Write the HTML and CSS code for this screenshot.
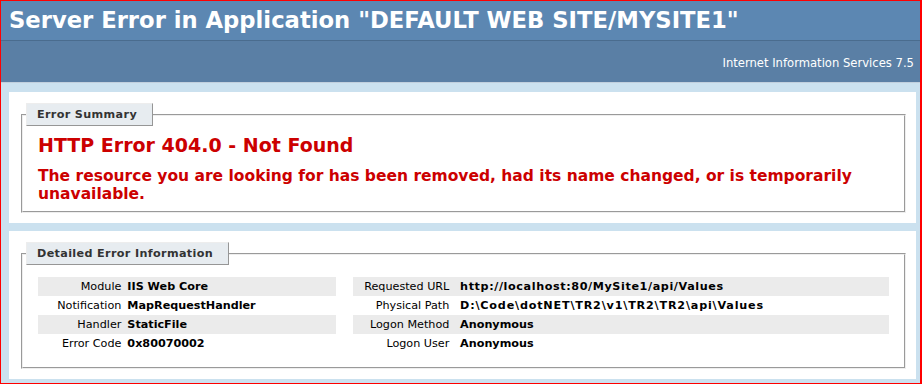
FILE: index.html
```html
<!DOCTYPE html>
<html lang="en">
<head>
    <meta charset="UTF-8" />
    <title>IIS 7.5 Detailed Error - 404.0 - Not Found</title>
    <link rel="stylesheet" href="styles.css">
</head>
<body>
    <div class="header">
        <h1>Server Error in Application "DEFAULT WEB SITE/MYSITE1"</h1>
    </div>
    <div class="server-version">
        <p>Internet Information Services 7.5</p>
    </div>
    <div class="content">
        <div class="summary-container">
            <fieldset>
                <legend>Error Summary</legend>
                <h2>HTTP Error 404.0 - Not Found</h2>
                <h3>The resource you are looking for has been removed, had its name changed, or is temporarily unavailable.</h3>
            </fieldset>
        </div>
        <div class="content-container">
            <fieldset>
                <legend>Detailed Error Information</legend>
                <div class="details">
                    <div class="details-left">
                        <table>
                            <tr class="alt"><th>Module</th><td>IIS Web Core</td></tr>
                            <tr><th>Notification</th><td>MapRequestHandler</td></tr>
                            <tr class="alt"><th>Handler</th><td>StaticFile</td></tr>
                            <tr><th>Error Code</th><td>0x80070002</td></tr>
                        </table>
                    </div>
                    <div class="details-right">
                        <table>
                            <tr class="alt"><th>Requested URL</th><td class="url">http://localhost:80/MySite1/api/Values</td></tr>
                            <tr><th>Physical Path</th><td class="path">D:\Code\dotNET\TR2\v1\TR2\TR2\api\Values</td></tr>
                            <tr class="alt"><th>Logon Method</th><td>Anonymous</td></tr>
                            <tr><th>Logon User</th><td>Anonymous</td></tr>
                        </table>
                    </div>
                </div>
            </fieldset>
        </div>
    </div>
</body>
</html>
```

FILE: styles.css
```css
* {
    box-sizing: border-box;
}
body {
    margin: 0;
    min-height: 100vh;
    border: 1px solid #ff0000;
    border-right-width: 2px;
    background: #cbe1ef;
    font-family: "DejaVu Sans", Verdana, sans-serif;
    font-size: 11.2px;
}
.header {
    padding: 6px 8px;
    background-color: #5c87b2;
}
h1 {
    margin: 0;
    font-size: 22.7px;
    line-height: 27px;
    color: #fff;
}
.server-version {
    height: 43px;
    padding: 16px 6px 0 6px;
    background-color: #5a7fa5;
    border-top: 1px solid #4a6c8e;
    border-bottom: 1px solid #c1cfdd;
    color: #fff;
    font-size: 11.6px;
    text-align: right;
}
.server-version p {
    margin: 0;
    line-height: 13px;
}
.content {
    margin: 0 4px 0 8px;
}
.summary-container,
.content-container {
    background: #fff;
    margin-top: 9px;
    padding: 11px 10px 10px 12px;
}
.content-container {
    margin-top: 8px;
}
fieldset {
    margin: 0;
    min-width: 0;
    padding: 0 15px 10px 15px;
    border: 2px groove #eeeeee;
}
.summary-container fieldset {
    padding-bottom: 8px;
}
legend {
    color: #333;
    padding: 4px 15px 4px 10px;
    margin: 4px 0 8px -12px;
    border-top: 1px solid #ededed;
    border-left: 1px solid #ededed;
    border-right: 1px solid #969696;
    border-bottom: 1px solid #969696;
    background: #e7ecf0;
    font-weight: bold;
    letter-spacing: 0.35px;
    line-height: 13px;
}
h2 {
    margin: 0;
    font-size: 19px;
    color: #cc0000;
}
h3 {
    margin: 11px 0 0 0;
    font-size: 15.5px;
    line-height: 18px;
    color: #cc0000;
}
.details {
    display: flex;
}
.details-left {
    width: 35%;
    margin-right: 2%;
}
.details-right {
    width: 63%;
}
table {
    margin: 4px 0;
    width: 100%;
    border-collapse: collapse;
}
td,
th {
    vertical-align: top;
    padding: 3px 0;
    text-align: left;
    line-height: 13px;
}
th {
    width: 30%;
    text-align: right;
    padding-right: 2%;
    font-weight: normal;
}
td {
    font-weight: bold;
}
td.url {
    letter-spacing: 0.6px;
}
td.path {
    letter-spacing: 0.8px;
}
.details-right th {
    width: 20%;
}
tr.alt th,
tr.alt td {
    background-color: #ebebeb;
}
```
